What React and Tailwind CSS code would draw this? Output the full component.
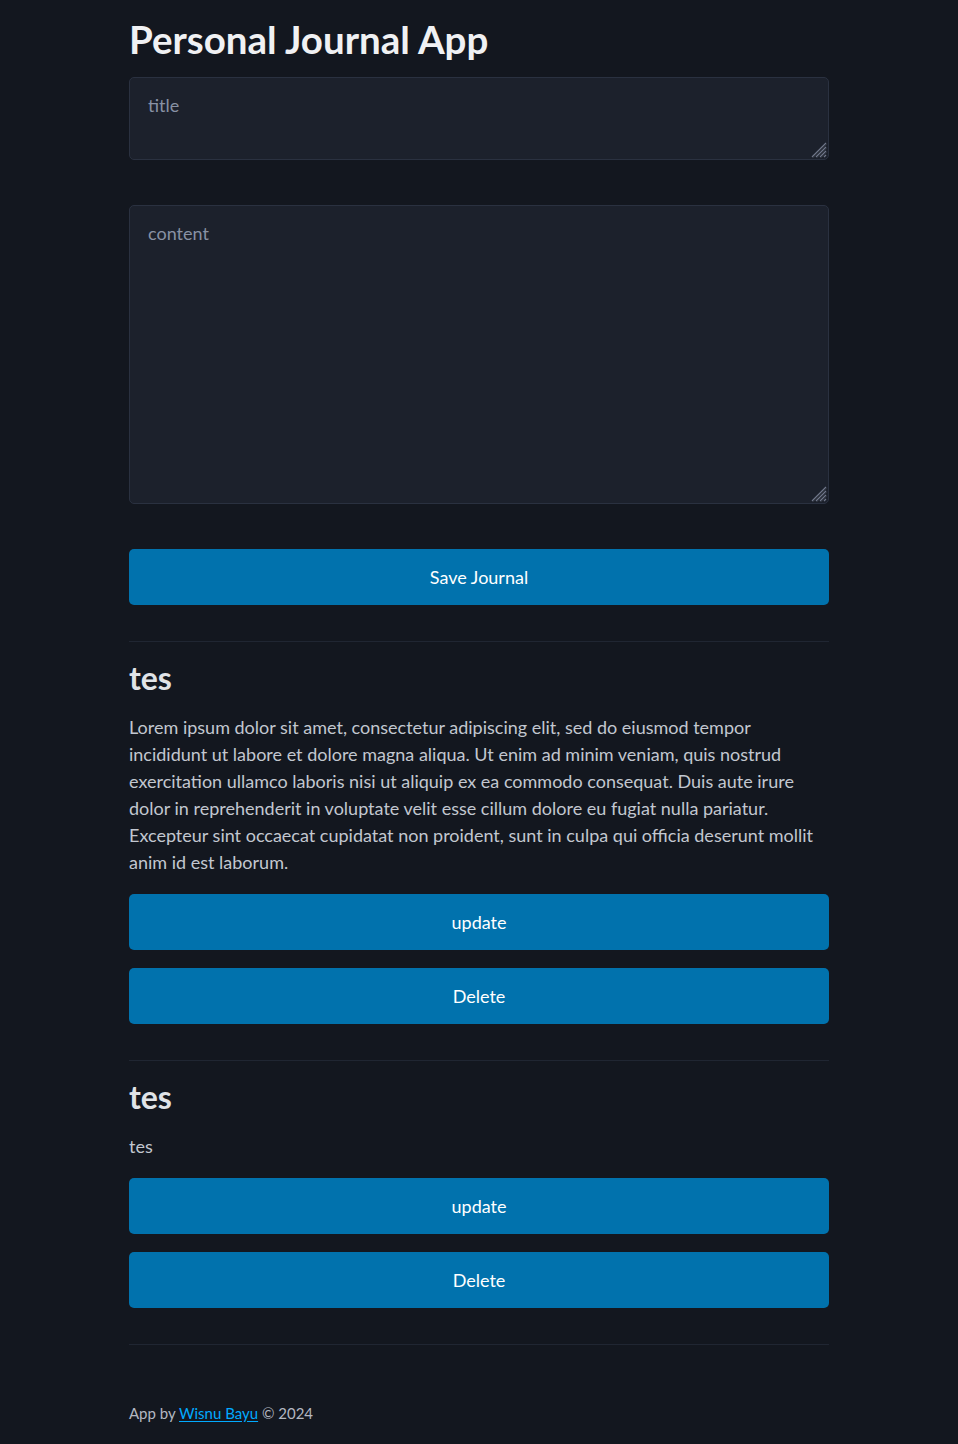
import React from 'react';

const entries = [
  {
    title: 'tes',
    content:
      'Lorem ipsum dolor sit amet, consectetur adipiscing elit, sed do eiusmod tempor incididunt ut labore et dolore magna aliqua. Ut enim ad minim veniam, quis nostrud exercitation ullamco laboris nisi ut aliquip ex ea commodo consequat. Duis aute irure dolor in reprehenderit in voluptate velit esse cillum dolore eu fugiat nulla pariatur. Excepteur sint occaecat cupidatat non proident, sunt in culpa qui officia deserunt mollit anim id est laborum.',
  },
  { title: 'tes', content: 'tes' },
];

const btn =
  'block w-full h-[56px] rounded-[5px] bg-[#0172ad] text-white text-[18px] leading-[27px] cursor-pointer';

const field =
  'block w-full rounded-[5px] border border-[#2a3140] bg-[#1c212c] px-[18px] pt-[14px] pb-[12px] text-[18px] leading-[27px] text-[#c2c7d0] placeholder:text-[#8891a4] outline-none resize-none';

// textarea with a drawn resize grip in the corner
const Field = ({ placeholder, className }) => (
  <div className={`relative ${className}`}>
    <textarea placeholder={placeholder} className={`${field} h-full`} />
    <svg
      className="pointer-events-none absolute right-[2px] bottom-[2px]"
      width="17"
      height="17"
      viewBox="0 0 17 17"
    >
      <path d="M16 2 L2 16 M16 6 L6 16 M16 10 L10 16 M16 14 L14 16" stroke="#70778a" strokeWidth="1.2" />
      <path d="M17 3 L3 17 M17 7 L7 17 M17 11 L11 17" stroke="#2b303a" strokeWidth="1" />
    </svg>
  </div>
);

const App = () => {
  return (
    <div
      className="min-h-screen bg-[#13171f] text-[#c2c7d0]"
      style={{ fontFamily: 'Lato, "Noto Sans", sans-serif' }}
    >
      <main className="mx-auto w-[700px] pt-[17px] pb-[20px]">
        <h1 className="text-[38.5px] leading-[45px] font-bold text-[#f0f1f3]">Personal Journal App</h1>

        {/* Form */}
        <form className="mt-[15px]" onSubmit={(e) => e.preventDefault()}>
          <Field placeholder="title" className="h-[83px]" />
          <Field placeholder="content" className="mt-[45px] h-[299px]" />
          <button type="submit" className={`${btn} mt-[45px]`}>
            Save Journal
          </button>
        </form>

        {/* Entries */}
        {entries.map((entry, i) => (
          <section key={i}>
            <hr className="mt-[36px] border-t border-[#202632]" />
            <h2 className="mt-[18px] text-[32px] leading-[36px] font-bold text-[#e0e3e7]">{entry.title}</h2>
            <p className="mt-[18px] text-[18px] leading-[27px]">{entry.content}</p>
            <button className={`${btn} mt-[18px]`}>update</button>
            <button className={`${btn} mt-[18px]`}>Delete</button>
          </section>
        ))}

        <hr className="mt-[36px] border-t border-[#202632]" />

        {/* Footer */}
        <footer className="mt-[56px] text-[15px] leading-[24px] text-[#b3b8c2]">
          App by{' '}
          <a href="#" className="text-[#01aaff] underline underline-offset-2">
            Wisnu Bayu
          </a>{' '}
          © 2024
        </footer>
      </main>
    </div>
  );
};

export default App;
